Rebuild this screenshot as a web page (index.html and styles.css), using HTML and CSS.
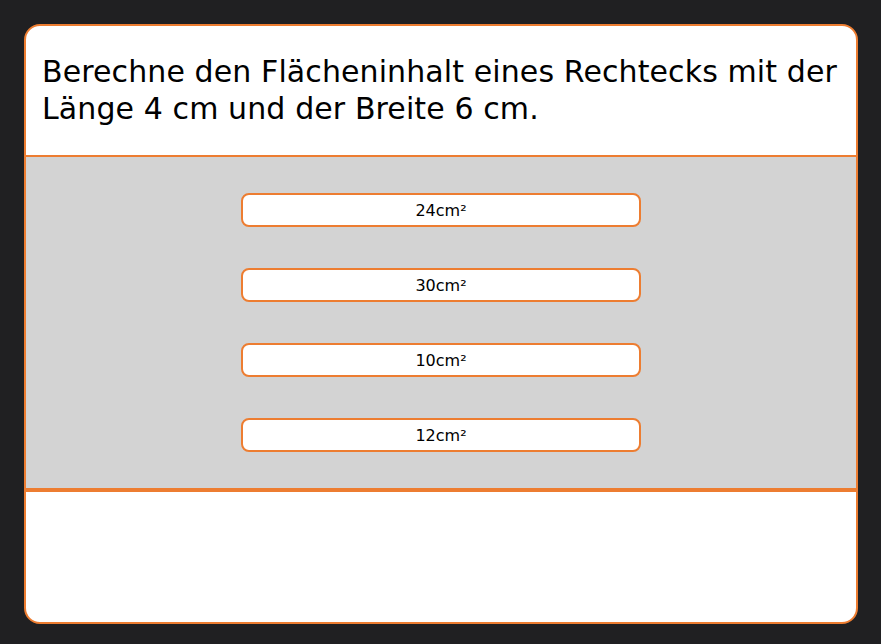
FILE: index.html
```html
<!DOCTYPE html>
<html lang="de">
<head>
<meta charset="utf-8">
<link rel="stylesheet" href="styles.css">
</head>
<body>
<div class="card">
  <div class="question">Berechne den Flächeninhalt eines Rechtecks mit der Länge 4 cm und der Breite 6 cm.</div>
  <div class="answers">
    <button class="answer">24cm²</button>
    <button class="answer">30cm²</button>
    <button class="answer">10cm²</button>
    <button class="answer">12cm²</button>
  </div>
  <div class="footer"></div>
</div>
</body>
</html>
```
FILE: styles.css
```css
html, body {
  margin: 0;
  padding: 0;
  background: #202022;
}
body {
  padding: 24px 23px 20px 24px;
}
.card {
  box-sizing: border-box;
  width: 834px;
  height: 600px;
  background: #ffffff;
  border: 2px solid #ed7d31;
  border-radius: 16px;
  overflow: hidden;
  display: flex;
  flex-direction: column;
}
.question {
  box-sizing: border-box;
  height: 131px;
  padding: 27px 8px 0 16px;
  font-family: "DejaVu Sans", sans-serif;
  font-size: 30px;
  line-height: 37px;
  letter-spacing: 0.1px;
  color: #000;
  border-bottom: 2px solid #ed7d31;
}
.answers {
  background: #d3d3d3;
  padding: 36px 0;
  display: flex;
  flex-direction: column;
  align-items: center;
  gap: 41px;
  border-bottom: 4px solid #ed7d31;
}
.answer {
  box-sizing: border-box;
  width: 400px;
  height: 34px;
  background: #fff;
  border: 2px solid #ed7d31;
  border-radius: 8px;
  font-family: "DejaVu Sans", sans-serif;
  font-size: 16px;
  color: #000;
  padding: 0;
}
.footer {
  flex: 1;
}
```
